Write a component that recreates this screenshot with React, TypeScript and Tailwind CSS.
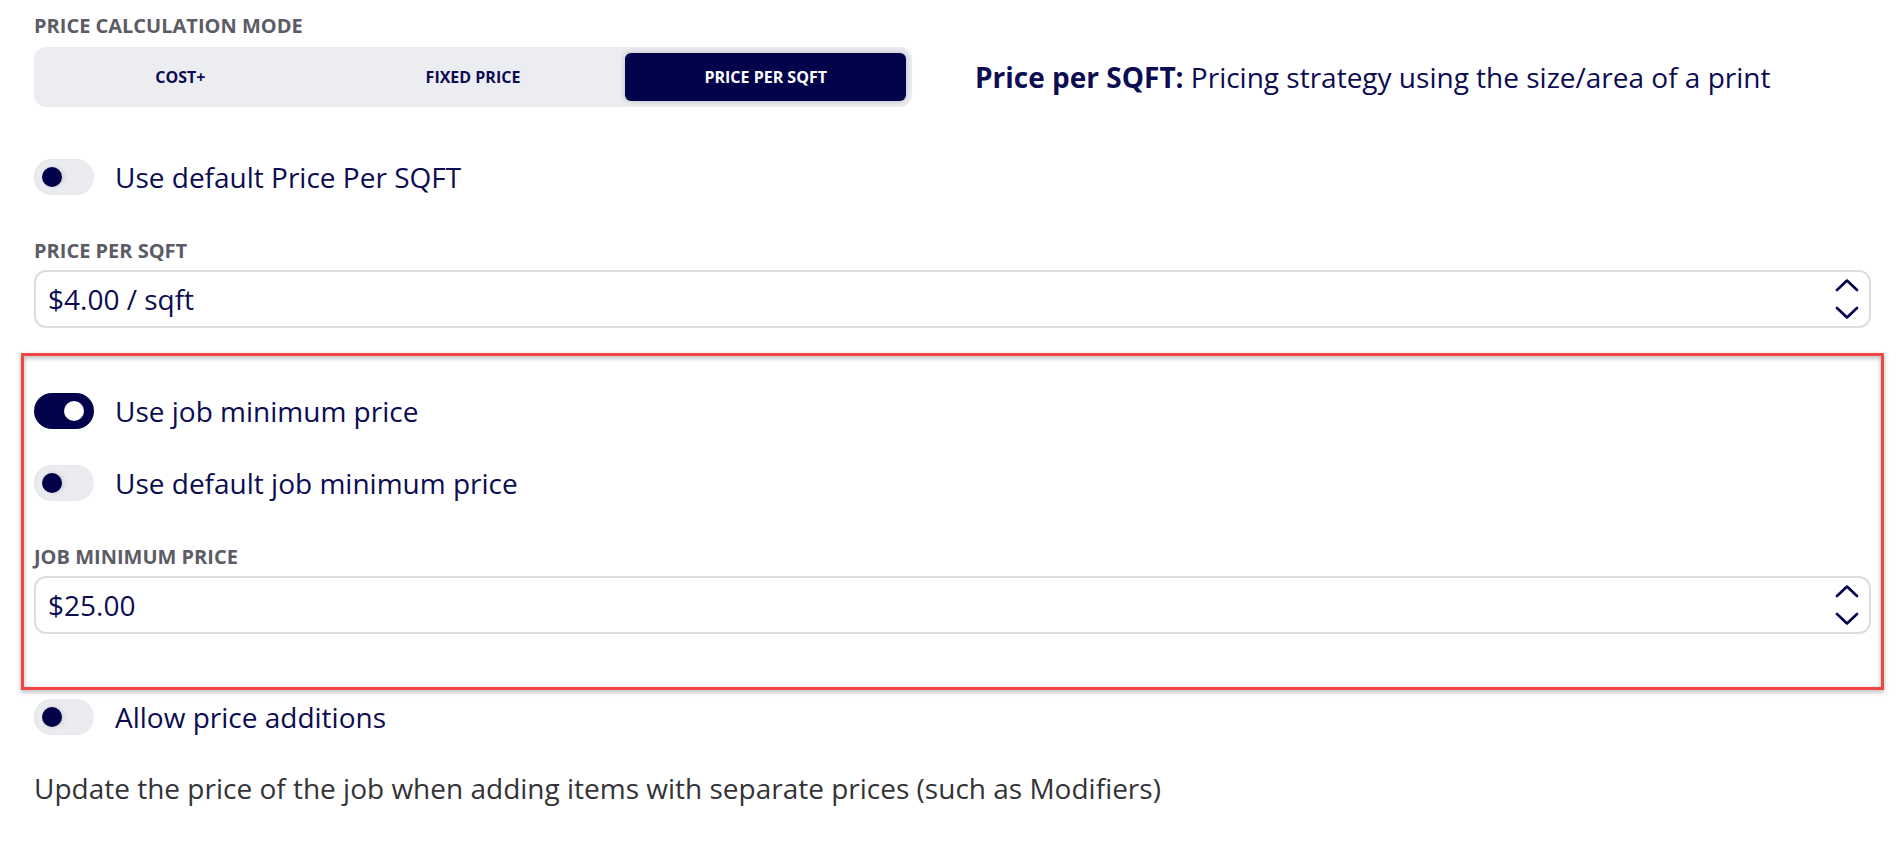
import React from "react";

const NAVY = "text-[#0c0c52]";

function Toggle({ on, label }: { on?: boolean; label: string }) {
  return (
    <div className="flex h-[36px] items-center gap-[21px]">
      <div
        className={
          on
            ? "flex h-[36px] w-[60px] items-center justify-end rounded-full bg-[#03034b] pr-[10px]"
            : "flex h-[36px] w-[60px] items-center justify-start rounded-full bg-[#ebecf0] pl-[8px] shadow-[inset_1px_0_3px_rgba(0,0,0,0.05)]"
        }
      >
        <div
          className={
            on
              ? "h-[20px] w-[20px] rounded-full bg-white"
              : "h-[20px] w-[20px] rounded-full bg-[#03034b] shadow-[2px_0_4px_rgba(0,0,0,0.12)]"
          }
        />
      </div>
      <span className={`text-[28px] leading-[36px] ${NAVY}`}>{label}</span>
    </div>
  );
}

function Label({ children, className = "" }: { children: React.ReactNode; className?: string }) {
  return (
    <div className={`text-[20px] font-bold uppercase leading-[28px] text-[#5c5c66] ${className}`}>
      {children}
    </div>
  );
}

function NumberField({ value }: { value: string }) {
  return (
    <div className="mt-[5px] flex h-[58px] items-center justify-between rounded-[12px] border-2 border-[#dcdce3] bg-white pl-[12px] pr-[10px]">
      <span className={`text-[28px] leading-[38px] ${NAVY}`}>{value}</span>
      <svg width="24" height="40" viewBox="0 0 24 40" fill="none" stroke="#03034b" strokeWidth="2.6" strokeLinecap="round" strokeLinejoin="round">
        <polyline points="2,11 12,1.5 22,11" />
        <polyline points="2,29 12,38.5 22,29" />
      </svg>
    </div>
  );
}

export default function App() {
  const tabs = ["COST+", "FIXED PRICE", "PRICE PER SQFT"];
  const active = 2;
  return (
    <div
      className="min-h-screen bg-white pl-[34px] pr-[26px] pt-[12px]"
      style={{ fontFamily: '"Open Sans", "Noto Sans", sans-serif' }}
    >
      <Label>Price Calculation Mode</Label>
      <div className="mt-[7px] flex items-center gap-[63px]">
        <div className="flex h-[60px] w-[878px] shrink-0 rounded-[12px] bg-[#ecedf1]">
          {tabs.map((t, i) => (
            <div key={t} className="flex flex-1 p-[6px]">
              <div
                className={
                  i === active
                    ? "flex flex-1 items-center justify-center rounded-[6px] bg-[#03034b] text-[16px] font-bold text-white shadow-[0_0_6px_rgba(0,0,0,0.22)]"
                    : "flex flex-1 items-center justify-center text-[16px] font-bold text-[#0c0c52]"
                }
              >
                {t}
              </div>
            </div>
          ))}
        </div>
        <div className={`text-[28px] leading-[38px] ${NAVY}`}>
          <span className="font-bold">Price per SQFT:</span> Pricing strategy using the size/area of a print
        </div>
      </div>

      <div className="mt-[52px]">
        <Toggle label="Use default Price Per SQFT" />
      </div>

      <Label className="mt-[42px]">Price per SQFT</Label>
      <NumberField value="$4.00 / sqft" />

      <div className="relative mx-[-13px] mt-[25px] px-[13px] pb-[56px] pt-[40px]">
        <Toggle on label="Use job minimum price" />
        <div className="mt-[36px]">
          <Toggle label="Use default job minimum price" />
        </div>
        <Label className="mt-[42px]">Job Minimum Price</Label>
        <NumberField value="$25.00" />
        <div className="pointer-events-none absolute inset-0 border-[3px] border-[#f04646] drop-shadow-[0_2px_2px_rgba(0,0,0,0.35)]" />
      </div>

      <div className="mt-[9px]">
        <Toggle label="Allow price additions" />
      </div>

      <div className="mt-[35px] text-[28px] leading-[36px] text-[#333338]">
        Update the price of the job when adding items with separate prices (such as Modifiers)
      </div>
    </div>
  );
}
